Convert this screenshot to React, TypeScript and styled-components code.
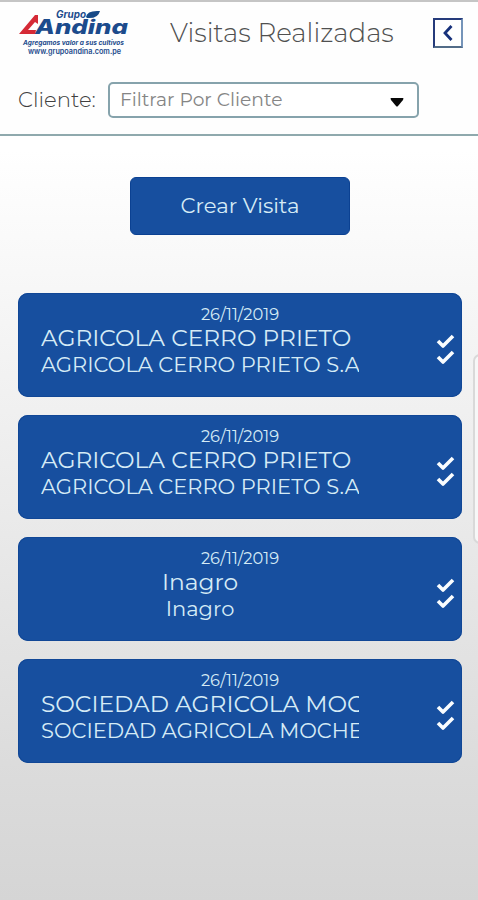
import React from 'react';
import styled, { createGlobalStyle } from 'styled-components';

const GlobalStyle = createGlobalStyle`
  * { box-sizing: border-box; }
  body { margin: 0; font-family: Montserrat, Inter, "Liberation Sans", sans-serif; }
  button { font: inherit; cursor: pointer; }
`;

const Screen = styled.div`
  position: relative;
  display: flex;
  flex-direction: column;
  width: 478px;
  height: 900px;
  overflow: hidden;
  background: linear-gradient(#fff 0, #fff 150px, #f4f4f4 340px, #e7e7e7 570px, #dbdbdb 780px, #d5d5d5 900px);
`;

const Header = styled.header`
  height: 136px;
  flex: none;
  background: #fefefe;
  border-top: 2px solid #c5c5c5;
  border-bottom: 2px solid #8fa9ad;
`;

const TitleRow = styled.div`
  display: flex;
  align-items: center;
  height: 62px;
  padding: 0 15px 0 18px;
`;

const Logo = styled.svg`
  width: 112px;
  height: 50px;
  flex: none;
`;

const Title = styled.h1`
  margin: 0 0 0 40px;
  width: 263px;
  font-size: 26.1px;
  font-weight: 300;
  line-height: 30px;
  white-space: nowrap;
  color: #505050;
`;

const BackButton = styled.button`
  display: flex;
  align-items: center;
  justify-content: center;
  width: 30px;
  height: 30px;
  flex: none;
  padding: 0;
  background: #fff;
  border: 2px solid;
  border-color: #263b7b #7594b9 #526c88 #263b7b;
`;

const FilterRow = styled.div`
  display: flex;
  align-items: center;
  margin-top: 18px;
  padding-left: 18px;
`;

const Label = styled.label`
  width: 90px;
  margin-bottom: 2px;
  font-size: 21.2px;
  font-weight: 300;
  white-space: nowrap;
  color: #404040;
`;

const Select = styled.div`
  display: flex;
  align-items: center;
  justify-content: space-between;
  width: 311px;
  height: 36px;
  padding: 0 13px 1px 10px;
  border: 2px solid #86a3ac;
  border-radius: 5px;
  background: #fff;
  color: #858585;
  font-size: 18.7px;
`;

const Arrow = styled.svg`
  width: 14px;
  height: 9px;
  margin-top: 5px;
`;

const Content = styled.main`
  display: flex;
  flex-direction: column;
  align-items: center;
  padding: 41px 16px 0 18px;
`;

const CreateButton = styled.button`
  width: 220px;
  height: 58px;
  padding: 0 0 2px;
  border: 1px solid #0b4192;
  border-radius: 6px;
  background: #174f9f;
  color: #d5ebf6;
  font-size: 21.2px;
`;

const VisitList = styled.div`
  display: flex;
  flex-direction: column;
  gap: 18px;
  width: 444px;
  margin-top: 58px;
`;

const Card = styled.article`
  display: grid;
  grid-template-columns: 318px 1fr;
  grid-template-rows: 17px 27px 27px;
  height: 104px;
  padding: 12px 7px 0 23px;
  border-radius: 10px;
  background: #174f9f;
  box-shadow: inset 0 0 0 1px #114796;
  color: #d5ebf6;
`;

const VisitDate = styled.time`
  grid-column: 1 / -1;
  width: 398px;
  text-align: center;
  font-size: 16.3px;
  line-height: 18px;
`;

const Line = styled.div<{ $main?: boolean; $short?: boolean }>`
  grid-column: 1;
  overflow-x: clip;
  white-space: nowrap;
  text-align: ${p => (p.$short ? 'center' : 'left')};
  font-size: ${p => (p.$main ? 23.3 : 21)}px;
  line-height: 32px;
`;

const Checks = styled.svg`
  grid-column: 2;
  grid-row: 2 / 4;
  justify-self: end;
  width: 20px;
  height: 34px;
  margin-top: 10px;
`;

const EdgeHandle = styled.div`
  position: absolute;
  top: 354px;
  left: 473px;
  width: 20px;
  height: 190px;
  border: 2px solid #d9d9d9;
  border-radius: 7px;
  background: #f7f7f7;
`;

const visits = [
  { name: 'AGRICOLA CERRO PRIETO', company: 'AGRICOLA CERRO PRIETO S.A' },
  { name: 'AGRICOLA CERRO PRIETO', company: 'AGRICOLA CERRO PRIETO S.A' },
  { name: 'Inagro', company: 'Inagro', short: true },
  { name: 'SOCIEDAD AGRICOLA MOCHE', company: 'SOCIEDAD AGRICOLA MOCHE' },
];

function BrandLogo() {
  return (
    <Logo viewBox="0 0 112 50" aria-label="Grupo Andina">
      <g fill="#1c4b8c" fontFamily="Inter, sans-serif" fontStyle="italic">
        <text x="38" y="10" fontSize="10" fontWeight="700" textLength="30" lengthAdjust="spacingAndGlyphs">Grupo</text>
        <text x="17" y="26" fontSize="20" fontWeight="800" textLength="93" lengthAdjust="spacingAndGlyphs">Andina</text>
        <text x="5" y="37" fontSize="6.5" fontWeight="700" textLength="101" lengthAdjust="spacingAndGlyphs">Agregamos valor a sus cultivos</text>
        <text x="10" y="46" fontSize="7.5" fontWeight="600" fontStyle="normal" textLength="93" lengthAdjust="spacingAndGlyphs">www.grupoandina.com.pe</text>
      </g>
      <path d="M1 26 L17 7 L20 7 L20 16 L17 14 L10 22 L18 22 L17 26 Z" fill="#d52a36" />
      <path d="M68 9 Q69 2 82 3 Q80 11 69 10 Z" fill="#174987" />
    </Logo>
  );
}

export default function App() {
  return (
    <>
      <GlobalStyle />
      <Screen>
        <Header>
          <TitleRow>
            <BrandLogo />
            <Title>Visitas Realizadas</Title>
            <BackButton aria-label="Volver">
              <svg width="14" height="18" viewBox="0 0 14 18" fill="none" stroke="#17317b" strokeWidth="2.8">
                <path d="M10.5 2 L4 9 L10.5 16" />
              </svg>
            </BackButton>
          </TitleRow>
          <FilterRow>
            <Label>Cliente:</Label>
            <Select role="combobox" aria-label="Cliente">
              <span>Filtrar Por Cliente</span>
              <Arrow viewBox="0 0 14 9" fill="#080808">
                <path d="M1 0 H13 Q14 0 13 2 L8 8 Q7 9 6 8 L1 2 Q0 0 1 0 Z" />
              </Arrow>
            </Select>
          </FilterRow>
        </Header>
        <Content>
          <CreateButton>Crear Visita</CreateButton>
          <VisitList>
            {visits.map((v, i) => (
              <Card key={i}>
                <VisitDate>26/11/2019</VisitDate>
                <Line $main $short={v.short}>{v.name}</Line>
                <Line $short={v.short}>{v.company}</Line>
                <Checks viewBox="0 0 20 34" fill="none" stroke="#fafdff" strokeWidth="3.6" strokeLinejoin="round">
                  <path d="M3 9 L8 14 L18 4 M3 25 L8 30 L18 20" />
                </Checks>
              </Card>
            ))}
          </VisitList>
        </Content>
        <EdgeHandle />
      </Screen>
    </>
  );
}
